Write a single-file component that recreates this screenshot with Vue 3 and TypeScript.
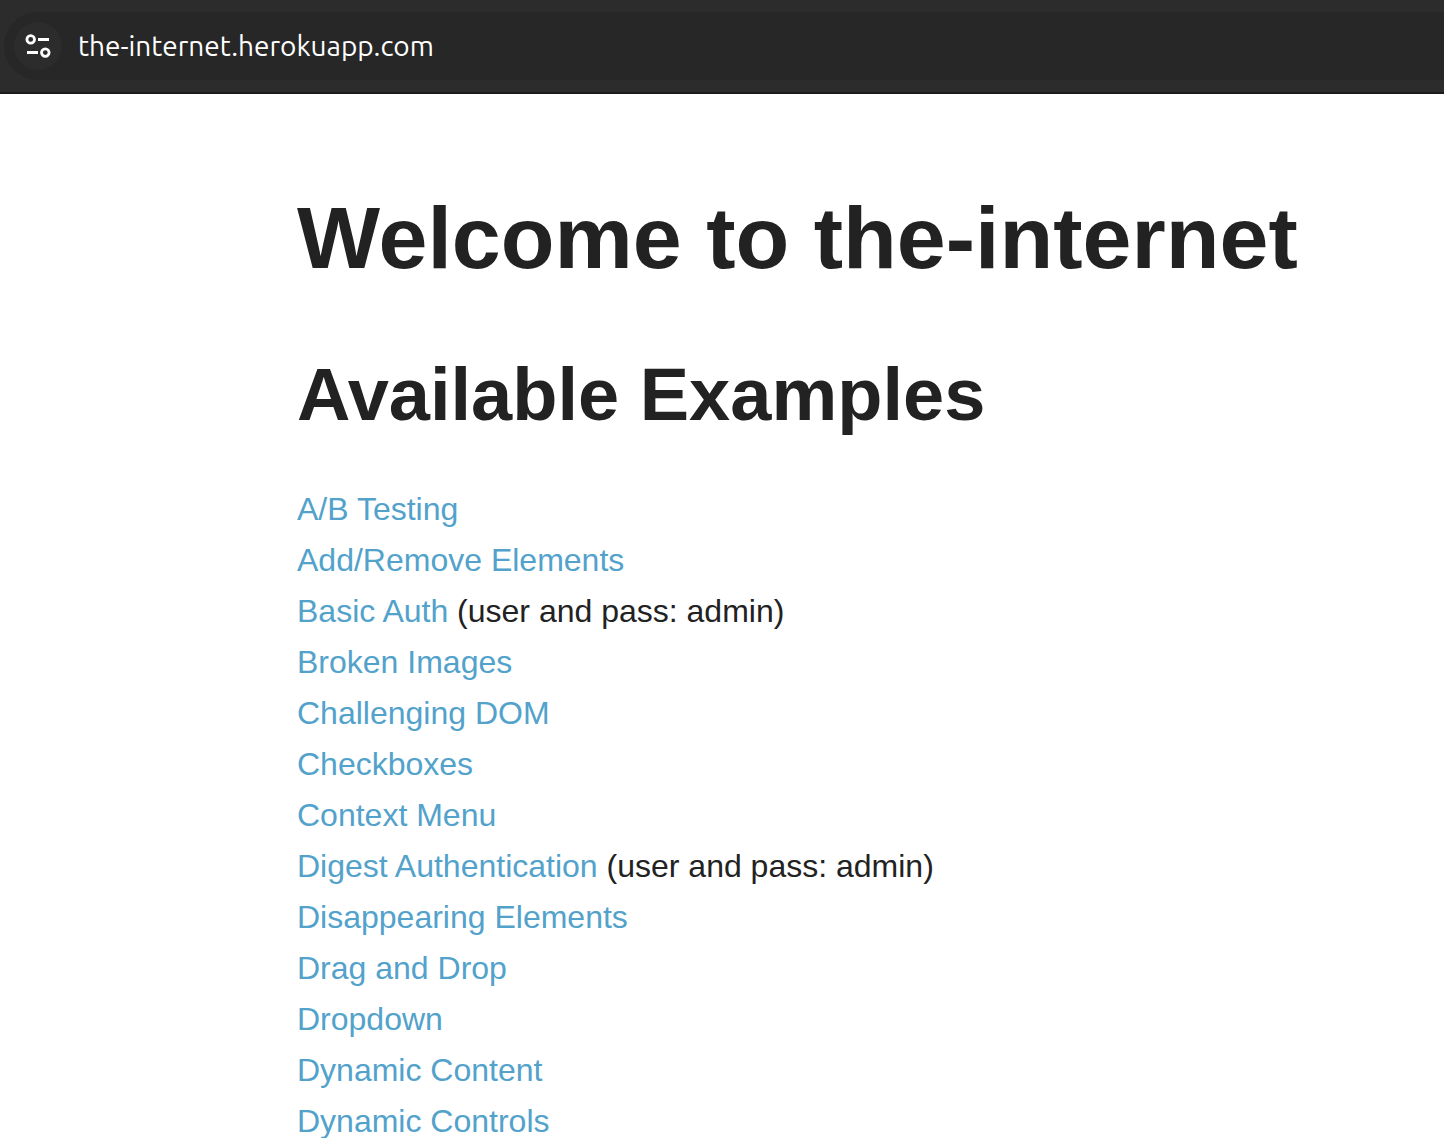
<script setup lang="ts">
import { ref } from 'vue'

interface Example {
  label: string
  note?: string
}

const address = ref('the-internet.herokuapp.com')

const examples: Example[] = [
  { label: 'A/B Testing' },
  { label: 'Add/Remove Elements' },
  { label: 'Basic Auth', note: '(user and pass: admin)' },
  { label: 'Broken Images' },
  { label: 'Challenging DOM' },
  { label: 'Checkboxes' },
  { label: 'Context Menu' },
  { label: 'Digest Authentication', note: '(user and pass: admin)' },
  { label: 'Disappearing Elements' },
  { label: 'Drag and Drop' },
  { label: 'Dropdown' },
  { label: 'Dynamic Content' },
  { label: 'Dynamic Controls' },
]
</script>

<template>
  <div class="window">
    <header class="toolbar">
      <div class="omnibox">
        <button class="site-info" type="button" aria-label="View site information">
          <svg width="28" height="28" viewBox="0 0 28 28" fill="none" stroke="#fff" stroke-width="2.8">
            <circle cx="6.7" cy="7.4" r="3.8" />
            <path d="M14 7.5H25M3 20.5H14" />
            <circle cx="21.3" cy="20.6" r="3.8" />
          </svg>
        </button>
        <input v-model="address" class="address" type="text" aria-label="Address" spellcheck="false" />
      </div>
    </header>
    <main class="content">
      <h1>Welcome to the-internet</h1>
      <h2>Available Examples</h2>
      <ul>
        <li v-for="item in examples" :key="item.label">
          <a href="#">{{ item.label }}</a>
          <template v-if="item.note">{{ ' ' + item.note }}</template>
        </li>
      </ul>
    </main>
  </div>
</template>

<style>
body {
  margin: 0;
  background: #fff;
}
</style>

<style scoped>
.window {
  height: 100vh;
  display: flex;
  flex-direction: column;
  overflow: hidden;
  font-family: "Liberation Sans", Arial, sans-serif;
  color: #222;
}
.toolbar {
  flex: none;
  padding: 12px 0 12px 4px;
  background: #2c2c2c;
  border-bottom: 2px solid #1b1b1b;
}
.omnibox {
  display: flex;
  align-items: center;
  gap: 16px;
  height: 68px;
  padding-left: 10px;
  border-radius: 34px 0 0 34px;
  background: #272727;
}
.site-info {
  display: flex;
  align-items: center;
  justify-content: center;
  width: 48px;
  height: 48px;
  padding: 0;
  border: 0;
  border-radius: 50%;
  background: #2c2c2c;
}
.address {
  flex: 1;
  min-width: 0;
  padding: 0;
  border: 0;
  outline: 0;
  background: transparent;
  color: #fff;
  font: 28px/36px Ubuntu, "Noto Sans", sans-serif;
}
.content {
  flex: 1;
  min-height: 0;
  padding: 82px 0 0 297px;
}
h1,
h2 {
  margin: 0;
  font-weight: 700;
  white-space: nowrap;
}
h1 {
  font-size: 88px;
  line-height: 124px;
}
h2 {
  margin-top: 43px;
  font-size: 74px;
  line-height: 104px;
}
ul {
  margin: 37px 0 0;
  padding: 0;
  list-style: none;
  font-size: 32px;
  line-height: 51px;
}
a {
  color: #52a2cb;
  text-decoration: none;
}
</style>
